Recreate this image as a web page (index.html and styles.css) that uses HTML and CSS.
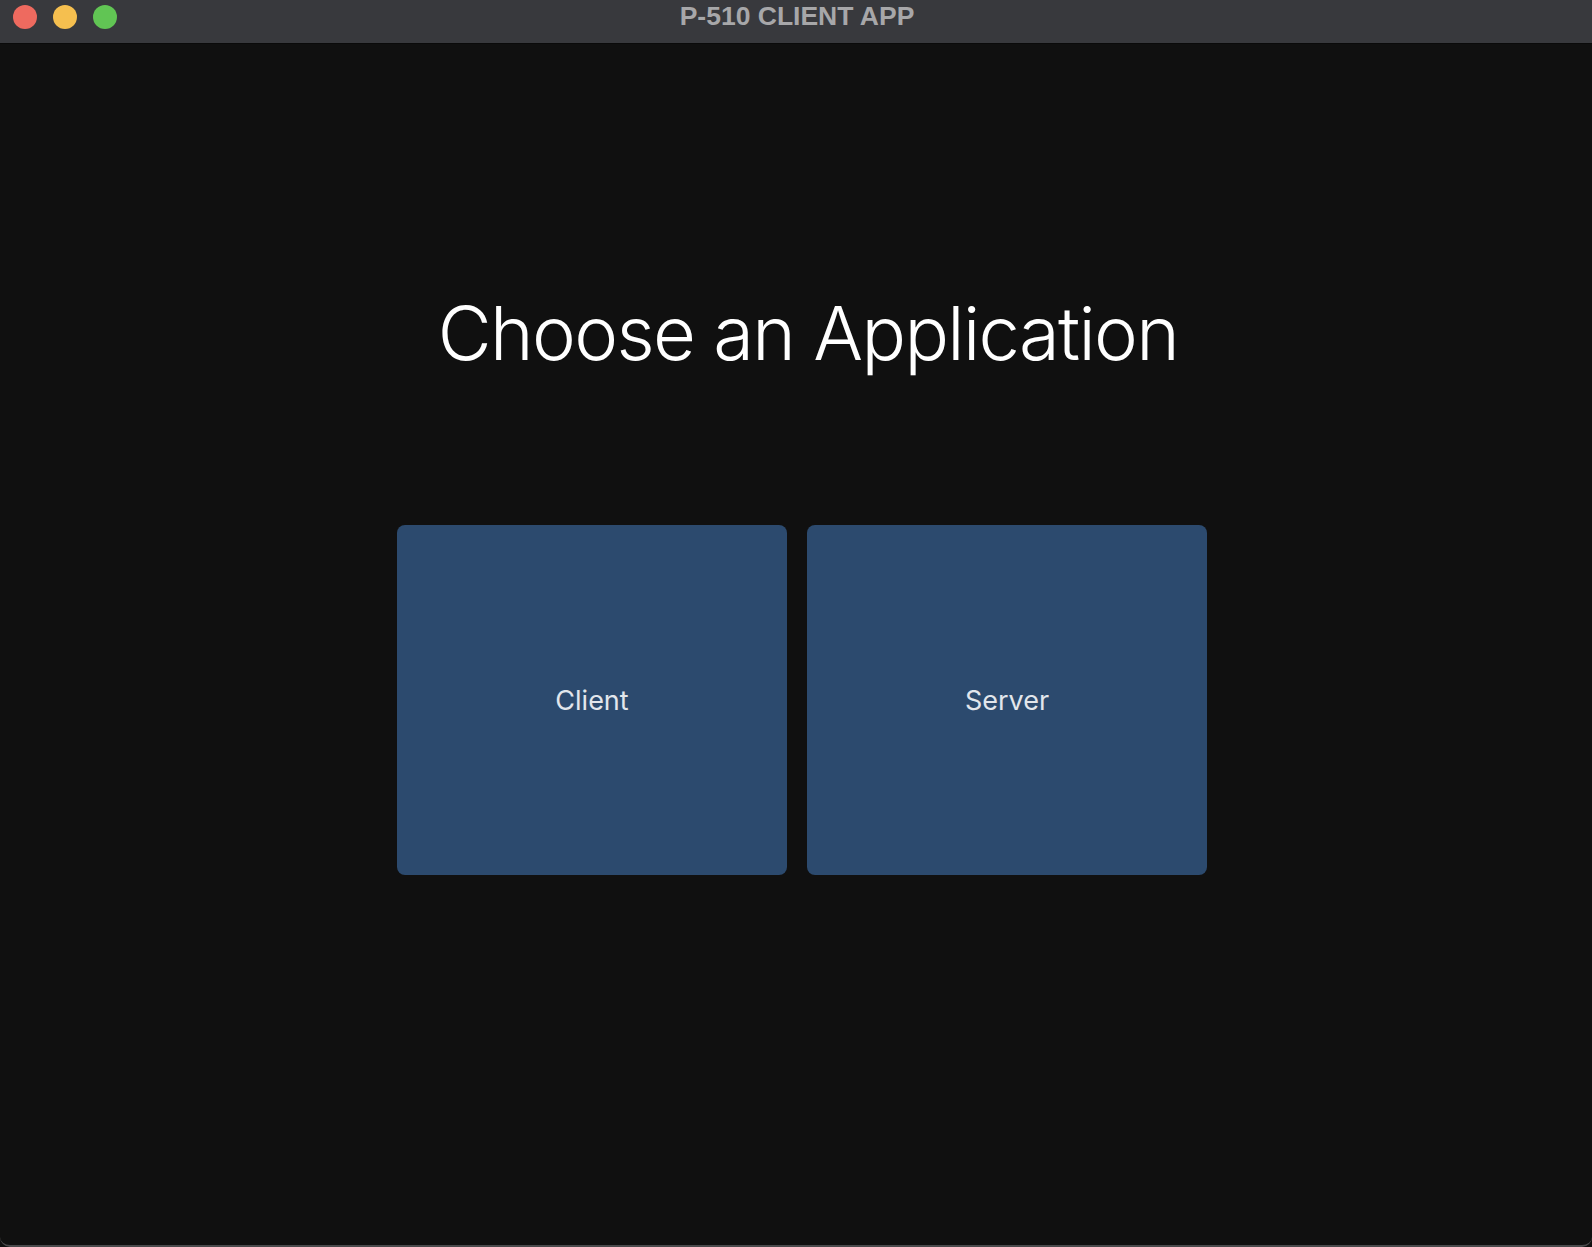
FILE: index.html
```html
<!DOCTYPE html>
<html>
<head>
<meta charset="utf-8">
<title>P-510 CLIENT APP</title>
<link rel="stylesheet" href="styles.css">
</head>
<body>
<div class="window">
  <div class="titlebar">
    <div class="lights">
      <span class="light red"></span>
      <span class="light yellow"></span>
      <span class="light green"></span>
    </div>
    <div class="title">P-510 CLIENT APP</div>
  </div>
  <main class="content">
    <h1 class="heading">Choose an Application</h1>
    <div class="choices">
      <button class="choice choice-client">Client</button>
      <button class="choice choice-server">Server</button>
    </div>
  </main>
</div>
</body>
</html>
```

FILE: styles.css
```css
html, body {
  margin: 0;
  padding: 0;
  background: #101010;
}
.window {
  width: 1592px;
  height: 1247px;
  display: flex;
  flex-direction: column;
  background: #101010;
  border-radius: 0 0 10px 10px;
  box-sizing: border-box;
  border-bottom: 2px solid #4a4a4c;
  overflow: hidden;
}
.titlebar {
  height: 44px;
  flex: none;
  background: #38393d;
  border-bottom: 1px solid #0a0a0a;
  box-sizing: border-box;
  position: relative;
  display: flex;
  align-items: center;
  justify-content: center;
}
.lights {
  position: absolute;
  left: 13px;
  top: 5px;
  display: flex;
  gap: 16px;
}
.light {
  width: 24px;
  height: 24px;
  border-radius: 50%;
  display: block;
}
.red { background: #ee6a5f; }
.yellow { background: #f5bf4f; }
.green { background: #61c554; }
.title {
  font-family: "Liberation Sans", Arial, sans-serif;
  font-weight: 700;
  font-size: 26.5px;
  color: #a7a7a9;
  line-height: 1;
  margin-top: -11px;
  margin-left: 2px;
}
.content {
  flex: 1;
  display: flex;
  flex-direction: column;
  align-items: center;
}
.heading {
  margin: 252px 0 0 24px;
  font-family: Inter, "Liberation Sans", sans-serif;
  font-weight: 300;
  font-size: 74px;
  line-height: 74px;
  color: #ffffff;
  letter-spacing: -1.65px;
}
.choices {
  margin-top: 155px;
  display: flex;
  gap: 20px;
  padding-left: 12px;
}
.choice {
  height: 350px;
  border: none;
  border-radius: 8px;
  background: #2c4a6e;
  color: #e2e6ec;
  font-family: Inter, "Liberation Sans", sans-serif;
  font-size: 27px;
  font-weight: 400;
  padding: 0;
  display: flex;
  align-items: center;
  justify-content: center;
}
.choice-client { width: 390px; }
.choice-server { width: 400px; }
```
